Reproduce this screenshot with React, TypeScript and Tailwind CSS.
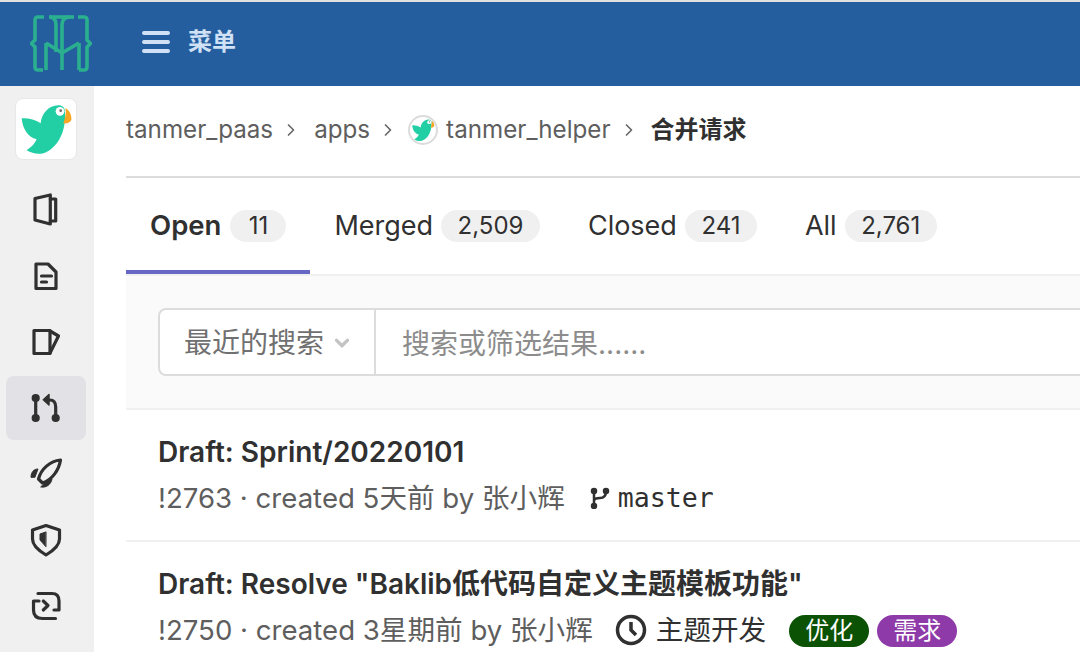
import { ChevronRight, ChevronDown } from "lucide-react";

const sans = "font-['Inter','Noto_Sans_CJK_SC',sans-serif]";

function Parrot({ size }: { size: number }) {
  return (
    <svg width={size} height={size} viewBox="27 18 162 162">
      <path
        d="M35 67C55 66 75 70 92 82C94 55 115 28 145 28C158 28 165 35 165 50C168 90 155 140 115 165C95 178 70 175 50 163C60 155 72 148 80 130C55 125 38 100 35 67z"
        fill="#22cfa5"
      />
      <circle cx="150" cy="46" r="13" fill="#fff" />
      <circle cx="152" cy="44" r="4" fill="#6b6b6b" />
      <path d="M166 36C178 42 186 58 184 72C180 80 170 84 160 82C164 70 170 52 166 36z" fill="#f6a623" />
    </svg>
  );
}

function Logo() {
  return (
    <svg width="62" height="58" viewBox="0 -1 62 58" fill="none" stroke="#2bb08f" strokeWidth="3.6">
      <path d="M14 1H8Q5 1 5 4v20l-3.500 3.500L5 31v20q0 3 3 3h5" />
      <path d="M48 1h6q3 0 3 3v20l3.500 3.500L57 31v20q0 3-3 3h-5" />
      <path d="M19 1h25" />
      <path d="M19 1q7 0 7 8v27M32 54V9q0-8 8-8" />
      <path d="M16 27v27M49 27v27M16 27l16 10 17-10" />
    </svg>
  );
}

function NavIcon({ children }: { children: React.ReactNode }) {
  return (
    <svg
      width="36"
      height="36"
      viewBox="0 0 36 36"
      fill="none"
      stroke="#303030"
      strokeWidth="3.2"
      strokeLinejoin="round"
      strokeLinecap="round"
    >
      {children}
    </svg>
  );
}

function SideItem({ active, children }: { active?: boolean; children: React.ReactNode }) {
  return (
    <div className={`flex h-16 w-20 items-center justify-center rounded-lg ${active ? "bg-[#e1e1e6]" : ""}`}>
      {children}
    </div>
  );
}

function Sidebar() {
  return (
    <aside className="flex w-[94px] shrink-0 flex-col items-center bg-[#f0f0f0] pt-3 pr-[2px]">
      <div className="flex h-[62px] w-[62px] items-center justify-center rounded-lg border border-[#e8e8e8] bg-white">
        <Parrot size={54} />
      </div>
      <div className="mt-[18px] flex flex-col items-center gap-[2px]">
        <SideItem>
          <NavIcon>
            <path d="M7 6.500L22.300 3v29L7 28z" />
            <path d="M22.300 7h5.400v22h-5.400" />
          </NavIcon>
        </SideItem>
        <SideItem>
          <NavIcon>
            <path d="M8 6h12l8 8v16.500H8z" />
            <path d="M13.500 18h10M13.500 24h5" />
          </NavIcon>
        </SideItem>
        <SideItem>
          <NavIcon>
            <path d="M6 6.500h16v23H6z" />
            <path d="M22 7l8.500 5L22 29" />
          </NavIcon>
        </SideItem>
        <SideItem active>
          <NavIcon>
            <circle cx="7.700" cy="8" r="2.500" fill="#303030" />
            <circle cx="7.700" cy="28" r="2.500" fill="#303030" />
            <circle cx="27.700" cy="28" r="2.500" fill="#303030" />
            <path d="M7.700 8v20M27.700 28V17q0-7-6-7h-2" />
            <path d="M15.300 9.700L21 4.500v10.500z" fill="#303030" strokeWidth="1.500" />
          </NavIcon>
        </SideItem>
        <SideItem>
          <NavIcon>
            <path d="M32.500 4C22 5 13 13 10.500 23L14.500 27C24 24 31 14 32.500 4z" />
            <path d="M3 21C3 16 6 13 10 13L7 21z" fill="#303030" strokeWidth="1" />
            <path d="M13 31C19 32 23 28 24 23L17 27z" fill="#303030" strokeWidth="1" />
          </NavIcon>
        </SideItem>
        <SideItem>
          <NavIcon>
            <path d="M18 3.500L31.500 8v9c0 6-6 11.500-13.500 16C10.500 28.500 4.500 23 4.500 17V8z" />
            <path d="M17.700 10L12 12v6l5.700 6.500z" fill="#303030" strokeWidth="1" />
          </NavIcon>
        </SideItem>
        <SideItem>
          <NavIcon>
            <path d="M10 5.500h14q7 0 7 7.500v9h-5" />
            <path d="M11 13H5.500v9q0 8.500 9 8.500h13" />
            <path d="M15.300 13l4.700 4.500-4.700 4.500" />
          </NavIcon>
        </SideItem>
      </div>
    </aside>
  );
}

function Crumb({ children }: { children: React.ReactNode }) {
  return (
    <>
      <span className="text-[24.2px] text-[#5e5e5e]">{children}</span>
      <ChevronRight size={20} className="mr-[5px] text-[#666]" strokeWidth={2} />
    </>
  );
}

function Tab({ label, count, active }: { label: string; count: string; active?: boolean }) {
  return (
    <div
      className={`flex h-[96px] items-center px-6 ${
        active ? "gap-[9px] border-b-[4px] border-[#6666c4] pt-1" : "gap-2"
      }`}
    >
      <span className={`text-[#303030] ${active ? "text-[27.5px] font-semibold" : "text-[27px]"}`}>{label}</span>
      <span
        className={`flex h-8 items-center justify-center rounded-full bg-[#f0f0f0] text-[24px] text-[#303030] ${
          active ? "w-14" : "px-[16.5px]"
        }`}
      >
        {count}
      </span>
    </div>
  );
}

function MergeRow({
  title,
  meta,
  children,
}: {
  title: string;
  meta: string;
  children: React.ReactNode;
}) {
  return (
    <div className="h-[132px] border-b-2 border-[#f0f0f0] pl-8 pt-[23px]">
      <div className="text-[28px] leading-[38px] font-semibold text-[#303030]">{title}</div>
      <div className="mt-[8px] flex items-center text-[27.6px] leading-[38px] text-[#5e5e5e]">
        <span>{meta}</span>
        {children}
      </div>
    </div>
  );
}

export default function App() {
  return (
    <div className={`flex h-[652px] w-[1080px] flex-col overflow-hidden bg-white ${sans}`}>
      <header className="flex h-[86px] shrink-0 items-center border-t-2 border-[#e0e0e0] bg-[#245e9f]">
        <div className="ml-[30px]">
          <Logo />
        </div>
        <div className="mb-[5px] ml-[50px] flex items-center">
          <div className="flex flex-col gap-[5px]">
            <span className="h-1 w-7 rounded-sm bg-[#d0e0f5]" />
            <span className="h-1 w-7 rounded-sm bg-[#d0e0f5]" />
            <span className="h-1 w-7 rounded-sm bg-[#d0e0f5]" />
          </div>
          <span className="ml-[18px] text-[24px] font-semibold text-[#d0e0f5]">菜单</span>
        </div>
      </header>
      <div className="flex min-h-0 flex-1">
        <Sidebar />
        <main className="min-w-0 flex-1 pl-8">
          <div className="flex h-[92px] items-center gap-2 border-b-2 border-[#dcdcdc] pb-[2px]">
            <Crumb>tanmer_paas</Crumb>
            <Crumb>apps</Crumb>
            <span className="-ml-[3px] flex h-[30px] w-[30px] items-center justify-center rounded-full border-2 border-[#dcdcdc] bg-white">
              <Parrot size={24} />
            </span>
            <Crumb>tanmer_helper</Crumb>
            <span className="-ml-px text-[24px] font-semibold text-[#303030]">合并请求</span>
          </div>
          <div className="flex border-b-2 border-[#f0f0f0]">
            <Tab label="Open" count="11" active />
            <Tab label="Merged" count="2,509" />
            <Tab label="Closed" count="241" />
            <Tab label="All" count="2,761" />
          </div>
          <div className="flex h-[134px] items-center border-b-2 border-[#f0f0f0] bg-[#fafafa] pl-8">
            <div className="flex h-[68px] flex-1 rounded-l-lg border-y-2 border-l-2 border-[#dcdcdc] bg-white">
              <div className="flex w-[216px] items-center border-r-2 border-[#dcdcdc] pl-6 pt-px text-[28px] text-[#707070]">
                最近的搜索
                <ChevronDown size={22} strokeWidth={3.5} className="ml-[7px] shrink-0 text-[#c4c4c4]" />
              </div>
              <div className="flex items-center pl-[26px] pt-[3px] text-[28px] text-[#8c8c8c]">搜索或筛选结果......</div>
            </div>
          </div>
          <MergeRow title="Draft: Sprint/20220101" meta="!2763 · created 5天前 by 张小辉">
            <svg className="ml-[25px]" width="20" height="22" viewBox="0 0 20 22" fill="none" stroke="#303030" strokeWidth="2.500">
              <circle cx="4" cy="4" r="2" fill="#303030" />
              <circle cx="4" cy="19" r="2" fill="#303030" />
              <circle cx="16" cy="4" r="2" fill="#303030" />
              <path d="M4 4v15M4 14q0-3 6-3 6 0 6-7" />
            </svg>
            <span className="ml-[8px] font-['DejaVu_Sans_Mono',monospace] text-[26.6px] text-[#303030]">master</span>
          </MergeRow>
          <MergeRow title={'Draft: Resolve "Baklib低代码自定义主题模板功能"'} meta="!2750 · created 3星期前 by 张小辉">
            <svg className="ml-[22px]" width="32" height="32" viewBox="0 0 32 32" fill="none" stroke="#303030" strokeWidth="3.500">
              <circle cx="16" cy="16" r="13.500" />
              <path d="M16 8v8l5 5" />
            </svg>
            <span className="ml-[9px] text-[#303030]">主题开发</span>
            <span className="ml-[23px] mt-px flex h-8 w-20 items-center justify-center rounded-full bg-[#0b5205] text-[24px] text-white">优化</span>
            <span className="ml-2 mt-px flex h-8 w-20 items-center justify-center rounded-full bg-[#8e3aa9] text-[24px] text-white">需求</span>
          </MergeRow>
        </main>
      </div>
    </div>
  );
}
